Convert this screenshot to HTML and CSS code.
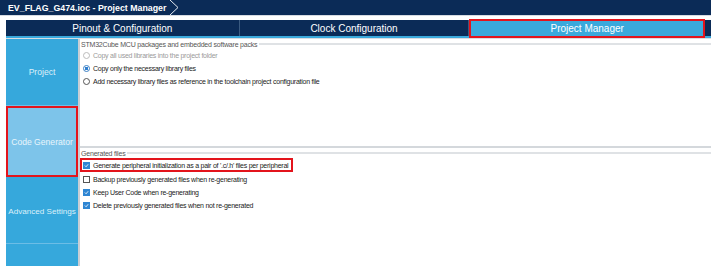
FILE: index.html
```html
<!DOCTYPE html>
<html lang="en">
<head>
  <meta charset="UTF-8">
  <title>EV_FLAG_G474.ioc - Project Manager</title>
  <link rel="stylesheet" href="styles.css">
</head>
<body>
  <div class="titlebar">
    <div class="crumb">
      <span>EV_FLAG_G474.ioc - Project Manager</span>
      <svg class="chevron" width="12" height="15" viewBox="0 0 12 15">
        <path d="M1 0 L9 7.5 L1 15" fill="none" stroke="#e6ebf2" stroke-width="1"/>
      </svg>
    </div>
  </div>

  <div class="tabs">
    <div class="tab">Pinout &amp; Configuration</div>
    <div class="tab">Clock Configuration</div>
    <div class="tab active">Project Manager</div>
  </div>
  <div class="tab-strip"></div>

  <div class="main">
    <div class="sidebar">
      <div class="side-item item-project">Project</div>
      <div class="side-item item-code active">Code Generator</div>
      <div class="side-item item-adv">Advanced Settings</div>
      <div class="side-item item-rest"></div>
    </div>

    <div class="content">
      <div class="group group-packs">
        <div class="legend"><span>STM32Cube MCU packages and embedded software packs</span></div>
        <label class="opt disabled"><span class="radio"></span>Copy all used libraries into the project folder</label>
        <label class="opt"><span class="radio on"></span>Copy only the necessary library files</label>
        <label class="opt"><span class="radio"></span>Add necessary library files as reference in the toolchain project configuration file</label>
      </div>

      <div class="group group-files">
        <div class="legend"><span>Generated files</span></div>
        <label class="opt boxed"><span class="check on"></span>Generate peripheral initialization as a pair of '.c/.h' files per peripheral</label>
        <label class="opt"><span class="check"></span>Backup previously generated files when re-generating</label>
        <label class="opt"><span class="check on"></span>Keep User Code when re-generating</label>
        <label class="opt"><span class="check on"></span>Delete previously generated files when not re-generated</label>
      </div>
    </div>
  </div>
</body>
</html>
```

FILE: styles.css
```css
body {
  margin: 0;
  width: 711px;
  height: 266px;
  overflow: hidden;
  background: #fff;
  font-family: 'Liberation Sans', Arial, sans-serif;
}

.titlebar {
  height: 15px;
  background: #0b2b57;
  border-bottom: 1px solid #d6dbe2;
  display: flex;
}
.crumb {
  display: flex;
  align-items: center;
  color: #fff;
  font-weight: 700;
  font-size: 8.8px;
  padding-left: 8px;
}
.crumb span {
  margin-right: 3px;
}
.chevron {
  display: block;
}

.tabs {
  margin: 4px 0 0 6px;
  height: 16px;
  display: flex;
  background: #0b2b57;
  padding-right: 6px;
}
.tab {
  color: #fff;
  font-size: 10px;
  display: flex;
  align-items: center;
  justify-content: center;
  border-right: 1px solid #3a5a80;
}
.tab:nth-child(1) { width: 233px; }
.tab:nth-child(2) { width: 229px; }
.tab.active {
  width: 236px;
  background: #3aa9dc;
  border: 2px solid #e3141c;
  margin-top: -1px;
  box-sizing: border-box;
  height: 19px;
}
.tab-strip {
  margin-left: 6px;
  height: 2px;
  background: #3aa9dc;
  border-bottom: 1px solid #d9dde2;
}

.main {
  display: flex;
  margin-left: 6px;
  height: 230px;
}

.sidebar {
  width: 72px;
  background: #36a8dc;
  display: flex;
  flex-direction: column;
}
.side-item {
  color: #dcf0fa;
  font-size: 8.6px;
  white-space: nowrap;
  display: flex;
  align-items: center;
  justify-content: center;
  border-bottom: 1px solid #6cbde6;
  box-sizing: border-box;
}
.item-project { height: 67px; }
.item-code { height: 71px; }
.item-adv { height: 67px; padding-top: 3px; font-size: 8.1px; }
.item-rest { flex: 1; border-bottom: none; }
.side-item.active {
  background: #7dc4ea;
  border: 2px solid #e3141c;
  color: #e8f5fc;
}

.content {
  flex: 1;
  border-left: 2px solid #c9ced4;
  display: flex;
  flex-direction: column;
}

.group {
  display: flex;
  flex-direction: column;
}
.group-packs {
  height: 107px;
  border-bottom: 2px solid #d4d8dc;
}
.group-files {
  margin-top: 1px;
}

.legend {
  display: flex;
  align-items: center;
  font-size: 7px;
  letter-spacing: -0.2px;
  color: #555;
  padding-left: 1px;
  height: 8px;
}
.legend::after {
  content: "";
  flex: 1;
  height: 2px;
  background: #dfe2e5;
  margin-left: 2px;
}
.group-packs .legend { margin-top: 1px; }

.opt {
  display: flex;
  align-items: center;
  font-size: 7px;
  letter-spacing: -0.25px;
  color: #222;
  height: 13px;
  padding-left: 3px;
  white-space: nowrap;
}
.group-packs .opt:first-of-type { margin-top: 1px; }
.opt.disabled { color: #9a9a9a; }
.opt.boxed {
  align-self: flex-start;
  border: 2px solid #e3141c;
  height: 10px;
  padding: 0 3px 0 1px;
  margin: 1px 0 1px 0;
}

.radio {
  width: 5px;
  height: 5px;
  border: 1px solid #555;
  border-radius: 50%;
  margin-right: 3px;
  background: #fff;
}
.disabled .radio { border-color: #bbb; }
.radio.on {
  border-color: #3a7fc4;
  background: radial-gradient(circle, #2f7fd0 0 1.5px, #fff 2px);
}

.check {
  width: 5px;
  height: 5px;
  border: 1px solid #555;
  margin-right: 3px;
  background: #fff;
}
.check.on {
  border-color: #2f86d3;
  background: #2f86d3 url("data:image/svg+xml,%3Csvg xmlns='http://www.w3.org/2000/svg' viewBox='0 0 6 6'%3E%3Cpath d='M1 3 L2.5 4.5 L5 1.5' fill='none' stroke='white' stroke-width='1'/%3E%3C/svg%3E") no-repeat center / 100%;
}
```
